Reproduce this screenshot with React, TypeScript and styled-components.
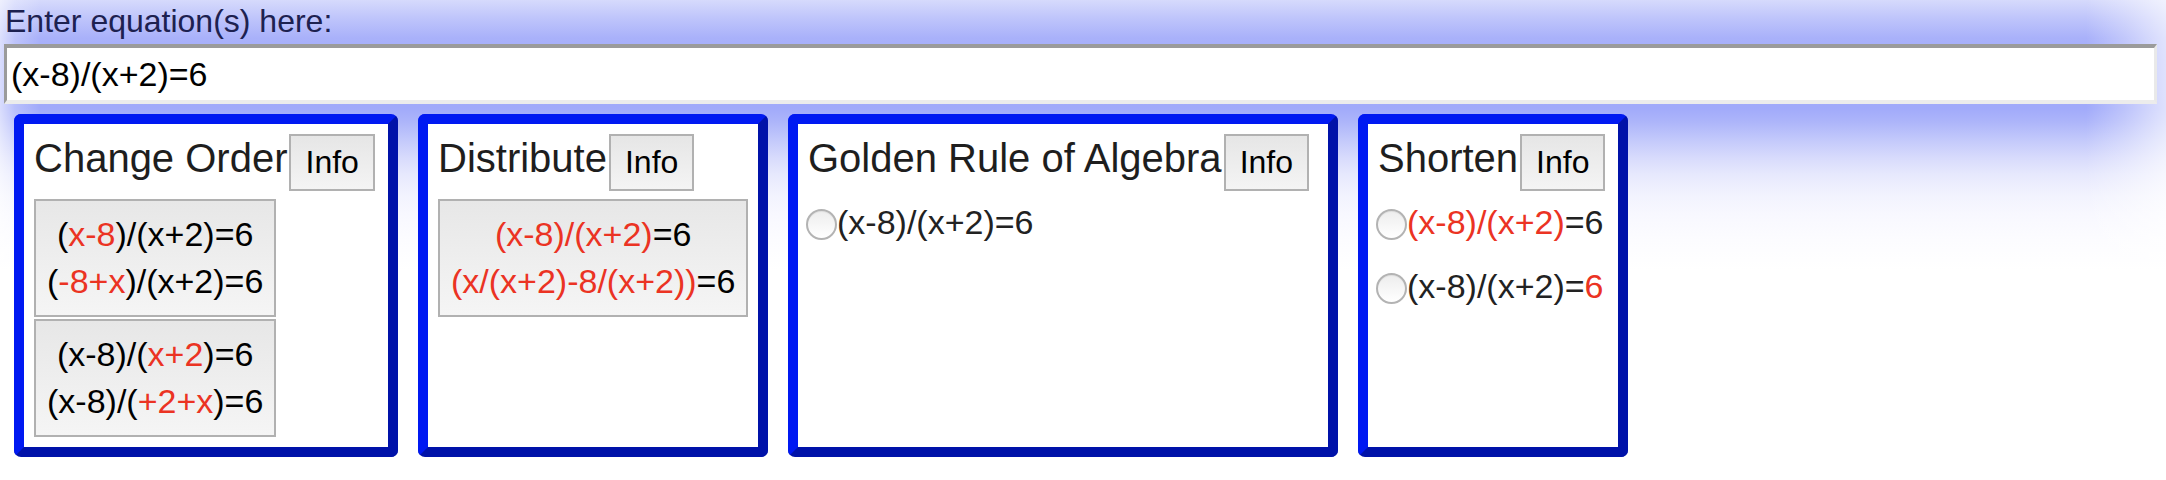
import React from "react";
import styled, { createGlobalStyle } from "styled-components";

const GlobalStyle = createGlobalStyle`
  html, body {
    margin: 0;
    padding: 0;
    background: #ffffff;
  }
  body {
    font-family: "Liberation Sans", Arial, Helvetica, sans-serif;
  }
`;

const Page = styled.div`
  box-sizing: border-box;
  min-height: 480px;
  padding: 2px 9px 0 4px;
  background:
    linear-gradient(
        to right,
        rgba(255, 255, 255, 0.6) 0px,
        rgba(255, 255, 255, 0.25) 15px,
        rgba(255, 255, 255, 0) 40px,
        rgba(255, 255, 255, 0) calc(100% - 80px),
        rgba(255, 255, 255, 0.3) calc(100% - 40px),
        rgba(255, 255, 255, 0.65) 100%
      )
      top / 100% 260px no-repeat,
    linear-gradient(
        to bottom,
        #d6dafc 0px,
        #bfc5fb 18px,
        #a9b1fa 38px,
        #a3acfa 60px,
        #a1aafa 108px,
        #adb5fa 122px,
        #c3c9fb 140px,
        #d8dbfc 158px,
        #e7e9fd 175px,
        #f2f3fe 195px,
        #f8f8ff 215px,
        #fcfcff 240px,
        #ffffff 270px
      )
      top / 100% 270px no-repeat,
    #ffffff;
`;

const Prompt = styled.label`
  display: block;
  padding-left: 1px;
  margin-bottom: 4px;
  font-size: 32px;
  line-height: 38px;
  color: #1d2150;
`;

const EquationInput = styled.input`
  display: block;
  box-sizing: border-box;
  width: 100%;
  height: 60px;
  margin: 0;
  padding: 0 4px;
  border-style: solid;
  border-width: 4px 3px;
  border-color: #9b9b9b #e9e9e9 #ececec #9b9b9b;
  background: #ffffff;
  font-family: "Liberation Sans", Arial, Helvetica, sans-serif;
  font-size: 34px;
  color: #000000;
  outline: none;
`;

const CardRow = styled.div`
  display: flex;
  align-items: stretch;
  gap: 20px;
  margin-top: 10px;
  padding-left: 10px;
`;

const Card = styled.section<{ $width: number }>`
  box-sizing: border-box;
  width: ${(p) => p.$width}px;
  flex: none;
  padding: 10px;
  border: 10px solid;
  border-color: #0019f2 #0012a9 #0012a9 #0019f2;
  border-radius: 7px;
  background: #ffffff;
`;

const CardHeader = styled.div`
  display: flex;
  align-items: flex-start;
  gap: 2px;
  margin-bottom: 8px;
  white-space: nowrap;
`;

const Title = styled.h2`
  margin: 0;
  font-size: 40px;
  line-height: 48px;
  font-weight: normal;
  color: #1e1e1e;
`;

const InfoButton = styled.button`
  box-sizing: border-box;
  height: 57px;
  margin: 0;
  padding: 0 14px;
  border: 2px solid #b1b1b1;
  border-radius: 0;
  background: linear-gradient(#e6e6e6, #f4f4f4);
  font-family: "Liberation Sans", Arial, Helvetica, sans-serif;
  font-size: 32px;
  color: #000000;
`;

const EqList = styled.div`
  display: flex;
  flex-direction: column;
  align-items: flex-start;
  gap: 2px;
`;

const EqButton = styled.button`
  margin: 0;
  padding: 10px 11px;
  border: 2px solid #b1b1b1;
  border-radius: 0;
  background: linear-gradient(#e7e7e7, #f5f5f5);
  font-family: "Liberation Sans", Arial, Helvetica, sans-serif;
  font-size: 34px;
  line-height: 47px;
  text-align: center;
  color: #000000;
  white-space: nowrap;
`;

const EqLine = styled.span`
  display: block;
`;

const Hi = styled.span`
  color: #eb3323;
`;

const RadioRow = styled.label`
  box-sizing: border-box;
  display: flex;
  align-items: flex-start;
  height: 64px;
  padding-top: 3px;
  margin-left: -2px;
  font-size: 34px;
  line-height: 40px;
  color: #222222;
  white-space: nowrap;
`;

const Radio = styled.input`
  appearance: none;
  -webkit-appearance: none;
  box-sizing: border-box;
  flex: none;
  width: 31px;
  height: 31px;
  margin: 7px 0 0;
  border: 2px solid #b3b3b3;
  border-radius: 50%;
  background: linear-gradient(#ededed, #ffffff);
  box-shadow: inset 0 1px 1px rgba(0, 0, 0, 0.06);
`;

type Part = { t: string; hi?: boolean };

const Expr: React.FC<{ parts: Part[] }> = ({ parts }) => (
  <>
    {parts.map((p, i) => (p.hi ? <Hi key={i}>{p.t}</Hi> : <React.Fragment key={i}>{p.t}</React.Fragment>))}
  </>
);

const changeOrder: Part[][][] = [
  [
    [{ t: "(" }, { t: "x-8", hi: true }, { t: ")/(x+2)=6" }],
    [{ t: "(" }, { t: "-8+x", hi: true }, { t: ")/(x+2)=6" }],
  ],
  [
    [{ t: "(x-8)/(" }, { t: "x+2", hi: true }, { t: ")=6" }],
    [{ t: "(x-8)/(" }, { t: "+2+x", hi: true }, { t: ")=6" }],
  ],
];

const distribute: Part[][][] = [
  [
    [{ t: "(x-8)/(x+2)", hi: true }, { t: "=6" }],
    [{ t: "(x/(x+2)-8/(x+2))", hi: true }, { t: "=6" }],
  ],
];

const golden: Part[][] = [[{ t: "(x-8)/(x+2)=6" }]];

const shorten: Part[][] = [
  [{ t: "(x-8)/(x+2)", hi: true }, { t: "=6" }],
  [{ t: "(x-8)/(x+2)=" }, { t: "6", hi: true }],
];

const ButtonRule: React.FC<{ title: string; width: number; items: Part[][][] }> = ({ title, width, items }) => (
  <Card $width={width}>
    <CardHeader>
      <Title>{title}</Title>
      <InfoButton>Info</InfoButton>
    </CardHeader>
    <EqList>
      {items.map((lines, i) => (
        <EqButton key={i}>
          {lines.map((l, j) => (
            <EqLine key={j}>
              <Expr parts={l} />
            </EqLine>
          ))}
        </EqButton>
      ))}
    </EqList>
  </Card>
);

const RadioRule: React.FC<{ title: string; width: number; name: string; items: Part[][] }> = ({
  title,
  width,
  name,
  items,
}) => (
  <Card $width={width}>
    <CardHeader>
      <Title>{title}</Title>
      <InfoButton>Info</InfoButton>
    </CardHeader>
    {items.map((l, i) => (
      <RadioRow key={i}>
        <Radio type="radio" name={name} />
        <span>
          <Expr parts={l} />
        </span>
      </RadioRow>
    ))}
  </Card>
);

export default function App() {
  return (
    <>
      <GlobalStyle />
      <Page>
        <Prompt htmlFor="eq">Enter equation(s) here:</Prompt>
        <EquationInput id="eq" defaultValue="(x-8)/(x+2)=6" />
        <CardRow>
          <ButtonRule title="Change Order" width={384} items={changeOrder} />
          <ButtonRule title="Distribute" width={350} items={distribute} />
          <RadioRule title="Golden Rule of Algebra" width={550} name="golden" items={golden} />
          <RadioRule title="Shorten" width={270} name="shorten" items={shorten} />
        </CardRow>
      </Page>
    </>
  );
}
